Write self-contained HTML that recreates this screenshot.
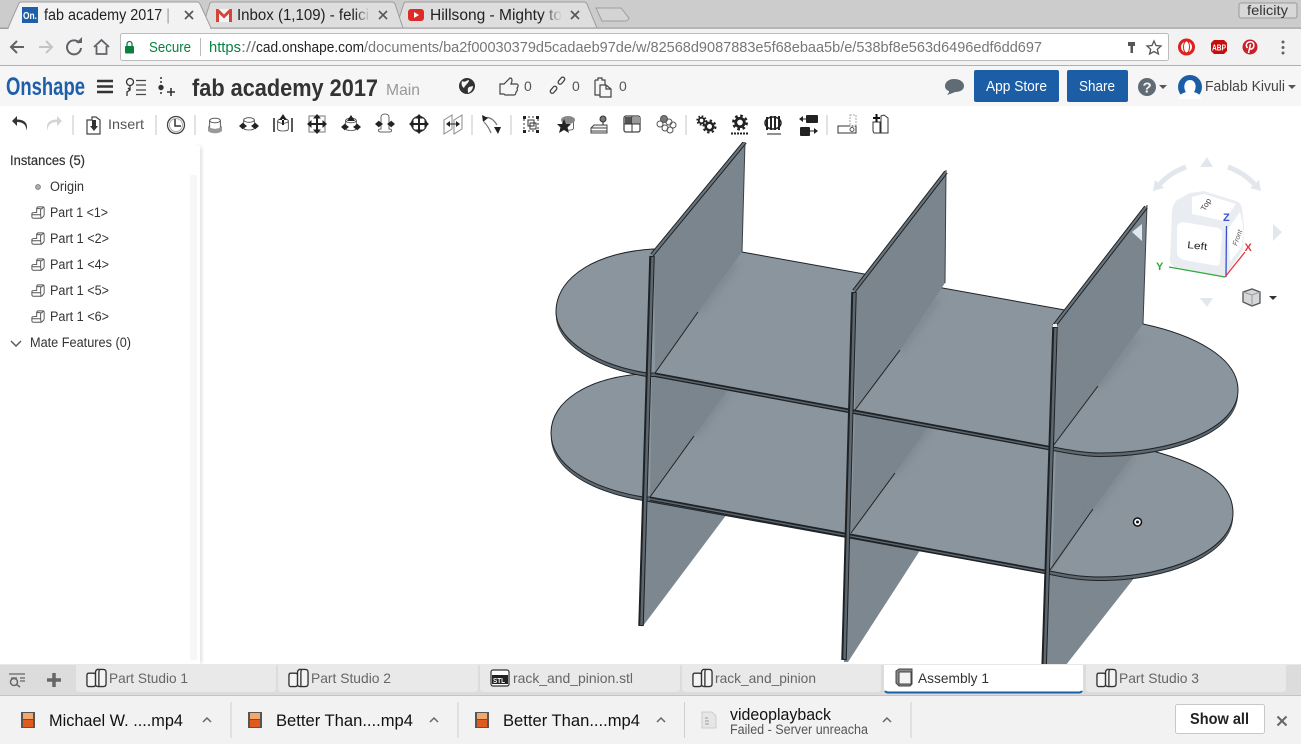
<!DOCTYPE html>
<html><head><meta charset="utf-8"><title>fab academy 2017</title>
<style>
html,body{margin:0;padding:0;width:1301px;height:744px;overflow:hidden;background:#fff}
svg{display:block}
text{font-family:"Liberation Sans",sans-serif;fill:#333}
</style></head><body>
<svg width="1301" height="744" viewBox="0 0 1301 744" xmlns="http://www.w3.org/2000/svg">
<defs>
<filter id="b" x="-50%" y="-50%" width="200%" height="200%"><feGaussianBlur stdDeviation="4"/></filter>
<filter id="sh" x="-20%" y="-5%" width="140%" height="110%"><feGaussianBlur stdDeviation="2"/></filter>
<linearGradient id="fadeA"><stop offset="0" stop-color="#f2f2f2" stop-opacity="0"/><stop offset="1" stop-color="#f2f2f2"/></linearGradient>
<linearGradient id="fadeI"><stop offset="0" stop-color="#dedede" stop-opacity="0"/><stop offset="1" stop-color="#dedede"/></linearGradient>
<clipPath id="view"><rect x="200" y="142" width="1101" height="523"/></clipPath>
<symbol id="part" viewBox="0 0 16 16" overflow="visible"><path d="M1 9 Q1 7.500 3 7.500 L6.500 7.500 L6.500 3 Q6.500 1.500 8 1 L13 1 Q15 1 15 3 V10 Q15 11 14 12 L12 14 H3 Q1 14 1 12 Z M1 10 H11 L11.500 14 M11 10 V4 L15 1 M6.500 3 H11" fill="none" stroke="#555" stroke-width="1.100"/></symbol>
<symbol id="studio" viewBox="0 0 22 20" overflow="visible"><path d="M1 7 Q1 5 3 5 H8 Q10 5 10 7 V17 Q10 19 8 19 H3 Q1 19 1 17 Z" fill="#f4f4f4" stroke="#333" stroke-width="1.400"/><path d="M10 4 Q10 2 12 1 H18 Q21 1 21 4 V16 Q21 19 18 19 H13 Q10 19 10 17 Z M14 1 Q13.500 3 13.500 5 V19" fill="#f4f4f4" stroke="#333" stroke-width="1.400"/></symbol>
<symbol id="cyl" viewBox="0 0 24 24" overflow="visible"><ellipse cx="12" cy="6" rx="8" ry="3.500" fill="none" stroke="#444" stroke-width="1.300"/><path d="M4 6 V18 C4 22 20 22 20 18 V6" fill="none" stroke="#444" stroke-width="1.300"/></symbol>
<symbol id="gear" viewBox="0 0 24 24" overflow="visible"><circle cx="12" cy="12" r="9.500" fill="none" stroke="#222" stroke-width="3.500" stroke-dasharray="3.730 3.730"/><circle cx="12" cy="12" r="6" fill="none" stroke="#222" stroke-width="4"/></symbol>
<path id="car" d="M-4 2 L0 -2 L4 2" fill="none" stroke="#666" stroke-width="1.500"/>
<g id="cross"><path d="M-8 0 H8 M0 -8 V8" stroke="#222" stroke-width="2"/><path d="M0 -10 L-4 -5.500 H4 Z M0 10 L-4 5.500 H4 Z M-10 0 L-5.500 -4 V4 Z M10 0 L5.500 -4 V4 Z" fill="#222"/></g>
<g id="twoarr"><path d="M-9 0 L-5 -3.500 V3.500 Z M-1 0 L-5 -3 V3 Z" fill="#222" transform="translate(-1,0)"/><path d="M9 0 L5 -3.500 V3.500 Z M1 0 L5 -3 V3 Z" fill="#222" transform="translate(1,0)"/></g>
</defs>

<!-- chrome tab strip -->
<rect width="1301" height="29" fill="#cccccc"/>
<path d="M396 28 L404 3 Q405 2 407 2 L584 2 Q586 2 587 4 L597 28 Z" fill="#dedede" stroke="#9e9e9e"/>
<path d="M202 28 L210 3 Q211 2 213 2 L392 2 Q394 2 395 4 L403 28 Z" fill="#dedede" stroke="#9e9e9e"/>
<path d="M0 28 L8 28 L19 3 Q20 2 22 2 L197 2 Q199 2 200 4 L211 28 L1301 28" fill="#f2f2f2" stroke="#9e9e9e"/>
<path d="M596 8 L621 8 L629 18 Q628 21 625 21 L602 21 Z" fill="#d4d4d4" stroke="#9e9e9e"/>
<rect x="0" y="28" width="8" height="1" fill="#9e9e9e"/><rect x="9" y="28" width="201" height="2" fill="#f2f2f2"/>
<rect x="22" y="7" width="16" height="16" fill="#1f5ea8"/>
<text x="23" y="19" font-size="10" font-weight="bold" style="fill:#fff" textLength="14" lengthAdjust="spacingAndGlyphs">On.</text>
<text x="44" y="20" font-size="15.500" textLength="126" lengthAdjust="spacingAndGlyphs" style="fill:#222">fab academy 2017 |</text>
<rect x="160" y="6" width="14" height="18" fill="url(#fadeA)"/>
<path d="M185 11 L193 19 M193 11 L185 19" stroke="#555" stroke-width="1.600"/>
<rect x="216" y="9" width="16" height="13" fill="#f4f4f4"/>
<path d="M216 9 H218.500 L224 14.500 L229.500 9 H232 V22 H229 V13.500 L224 18.500 L219 13.500 V22 H216 Z" fill="#d54437"/>
<text x="237" y="20" font-size="15.500" textLength="132" lengthAdjust="spacingAndGlyphs" style="fill:#222">Inbox (1,109) - felici</text>
<rect x="355" y="6" width="15" height="18" fill="url(#fadeI)"/>
<path d="M379 11 L387 19 M387 11 L379 19" stroke="#555" stroke-width="1.600"/>
<rect x="408" y="9" width="16" height="12" rx="3" fill="#dd2c28"/><path d="M414 12 L419 15 L414 18 Z" fill="#fff"/>
<text x="430" y="20" font-size="15.500" textLength="132" lengthAdjust="spacingAndGlyphs" style="fill:#222">Hillsong - Mighty to</text>
<rect x="542" y="6" width="20" height="18" fill="url(#fadeI)"/>
<path d="M571 11 L579 19 M579 11 L571 19" stroke="#555" stroke-width="1.600"/>
<rect x="1239" y="3" width="58" height="15" rx="2" fill="#d8d8d8" stroke="#9a9a9a"/>
<text x="1247" y="15" font-size="14" textLength="41" lengthAdjust="spacingAndGlyphs" style="fill:#333">felicity</text>

<!-- address row -->
<rect y="29" width="1301" height="36" fill="#f2f2f2"/>
<rect y="65" width="1301" height="1" fill="#b0b0b0"/>
<path d="M24 47 H11 M17 41 L11 47 L17 53" fill="none" stroke="#5f6368" stroke-width="2"/>
<path d="M39 47 H52 M46 41 L52 47 L46 53" fill="none" stroke="#c4c4c4" stroke-width="2"/>
<path d="M79.500 43 A7 7 0 1 0 81 48" fill="none" stroke="#5f6368" stroke-width="2"/><path d="M76 43 H82 V37 Z" fill="#5f6368"/>
<path d="M94 47 L101.500 40 L109 47 M96.500 46 V54 H106.500 V46" fill="none" stroke="#5f6368" stroke-width="1.800"/>
<rect x="120.500" y="33.500" width="1048" height="27" rx="2" fill="#fff" stroke="#bcbcbc"/>
<rect x="125" y="46" width="9" height="7.500" rx="1" fill="#0b8043"/><path d="M127 46 V44 A2.500 2.500 0 0 1 132 44 V46" fill="none" stroke="#0b8043" stroke-width="1.300"/>
<text x="149" y="52" font-size="15" textLength="42" lengthAdjust="spacingAndGlyphs" style="fill:#0b8043">Secure</text>
<rect x="200" y="38" width="1" height="18" fill="#bbb"/>
<text x="209" y="52" font-size="15" textLength="32" lengthAdjust="spacingAndGlyphs" style="fill:#0b8043">https</text>
<text x="241" y="52" font-size="15" textLength="15" lengthAdjust="spacingAndGlyphs" style="fill:#777">://</text>
<text x="256" y="52" font-size="15" textLength="108" lengthAdjust="spacingAndGlyphs" style="fill:#222">cad.onshape.com</text>
<text x="364" y="52" font-size="15" textLength="678" lengthAdjust="spacingAndGlyphs" style="fill:#777">/documents/ba2f00030379d5cadaeb97de/w/82568d9087883e5f68ebaa5b/e/538bf8e563d6496edf6dd697</text>
<path d="M1128 42 H1135 V46 H1133 V53 H1130.500 V46 H1128 Z" fill="#555"/>
<path d="M1154 41 L1156 45.500 L1161 46 L1157.300 49.300 L1158.400 54 L1154 51.500 L1149.600 54 L1150.700 49.300 L1147 46 L1152 45.500 Z" fill="none" stroke="#555" stroke-width="1.300"/>
<circle cx="1186.500" cy="47" r="7" fill="none" stroke="#e0201b" stroke-width="3"/><ellipse cx="1186.500" cy="47" rx="3" ry="6" fill="#fff" stroke="#e0201b"/>
<path d="M1214 40 H1224 L1227 43 V51 L1224 54 H1214 L1211 51 V43 Z" fill="#c70d0d"/>
<text x="1212" y="50.500" font-size="8" font-weight="bold" style="fill:#fff" textLength="14" lengthAdjust="spacingAndGlyphs">ABP</text>
<circle cx="1250" cy="47" r="7.500" fill="#cb2027"/>
<path d="M1248.500 53 L1250.500 44 M1247.500 48 C1245 45 1247 41.800 1250.500 41.800 C1254.500 41.800 1255 47.500 1251.500 49 C1250.500 49.300 1250 49 1249.500 48.300" fill="none" stroke="#fff" stroke-width="1.500"/>
<circle cx="1283" cy="42" r="1.500" fill="#5f6368"/><circle cx="1283" cy="47.500" r="1.500" fill="#5f6368"/><circle cx="1283" cy="53" r="1.500" fill="#5f6368"/>

<!-- onshape header -->
<rect y="66" width="1301" height="40" fill="#f6f6f6"/>
<text x="6" y="95" font-size="25" font-weight="bold" textLength="79" lengthAdjust="spacingAndGlyphs" style="fill:#1f5ea8">Onshape</text>
<path d="M97 81 H113 M97 86.500 H113 M97 92 H113" stroke="#333" stroke-width="2.400"/>
<circle cx="130" cy="82" r="3.500" fill="none" stroke="#333" stroke-width="1.300"/>
<path d="M130 85.500 V90 L127 92 V96 M128 88 L130 90" fill="none" stroke="#333" stroke-width="1.300"/>
<path d="M136 80.500 H146 M136 85 H146 M136 90 H146 M136 94.500 H146" stroke="#444" stroke-width="1.300"/>
<circle cx="161" cy="78" r="1" fill="#333"/><circle cx="161" cy="82" r="1" fill="#333"/><circle cx="161" cy="87.500" r="2.700" fill="#333"/><circle cx="161" cy="93" r="1" fill="#333"/>
<path d="M167 92 H175 M171 88 V96" stroke="#333" stroke-width="1.600"/>
<text x="192" y="96" font-size="24" font-weight="bold" textLength="186" lengthAdjust="spacingAndGlyphs" style="fill:#333">fab academy 2017</text>
<text x="386" y="95" font-size="16" textLength="34" lengthAdjust="spacingAndGlyphs" style="fill:#999">Main</text>
<circle cx="467" cy="86" r="8" fill="#333"/>
<path d="M462 81 C465 83 467 80 469 80 C469 83 465 85 464 88 C462 87 461 84 462 81 M469 87 L473 86 C473 89 471 92 468 93 C468 90 467 89 469 87" fill="#f6f6f6"/>
<path d="M500 84 H504 L510 78 C513 78 512 82 511 84 H517 C519 85 518 87 517 88 C518 90 517 91 516 92 C516 94 515 95 514 95 H505 L504 94 H500 Z" fill="none" stroke="#444" stroke-width="1.200"/>
<text x="524" y="91" font-size="14" style="fill:#555" textLength="8">0</text>
<g fill="none" stroke="#444" stroke-width="1.300"><rect x="-2" y="-7" width="4" height="8" rx="2" transform="translate(559.500,83) rotate(40)"/><rect x="-2" y="-1" width="4" height="8" rx="2" transform="translate(555.500,87.500) rotate(40)"/></g>
<text x="572" y="91" font-size="14" style="fill:#555" textLength="8">0</text>
<path d="M595 80 H598 V78 H602 V80 H605 V85 M595 80 V95 H600 M600 85 H606 L611 89 V97 H600 Z M606 85 V89 H611" fill="none" stroke="#444" stroke-width="1.200"/>
<text x="619" y="91" font-size="14" style="fill:#555" textLength="8">0</text>
<path d="M954 79 C960 79 964 82 964 86 C964 90 960 92 955 92 C953 93 950 94 947 95 C949 93 949 92 949 91 C946 90 945 88 945 86 C945 82 949 79 954 79 Z" fill="#5f6b75"/>
<rect x="974" y="70" width="85" height="32" rx="2" fill="#1b5ea6"/>
<text x="986" y="91" font-size="15" textLength="61" lengthAdjust="spacingAndGlyphs" style="fill:#fff">App Store</text>
<rect x="1067" y="70" width="61" height="32" rx="2" fill="#1b5ea6"/>
<text x="1079" y="91" font-size="15" textLength="36" lengthAdjust="spacingAndGlyphs" style="fill:#fff">Share</text>
<circle cx="1147" cy="87" r="9" fill="#5f6b75"/>
<text x="1142.500" y="92.500" font-size="15" font-weight="bold" style="fill:#f6f6f6">?</text>
<path d="M1159 85 H1167 L1163 89 Z" fill="#555"/>
<circle cx="1190" cy="87" r="12" fill="#1b5ea6"/>
<path d="M1179 99 C1180 93 1184 93 1186 92 C1183 88 1184 80 1190 80 C1196 80 1197 88 1194 92 C1196 93 1200 93 1201 99 Z" fill="#fff"/>
<text x="1205" y="91" font-size="14.500" textLength="80" lengthAdjust="spacingAndGlyphs" style="fill:#444">Fablab Kivuli</text>
<path d="M1288 85 H1296 L1292 89 Z" fill="#555"/>

<!-- 3d viewport -->
<rect y="106" width="1301" height="559" fill="#fff"/>
<g clip-path="url(#view)">
 <!-- panel parts below bottom shelf -->
 <path d="M644 495 L727 514 L643 626 L640 626 Z" fill="#7d878f"/>
 <path d="M848 530 L928 538 L848 662 L844 662 Z" fill="#7d878f"/>
 <path d="M1048 565 L1135 577 L1062 670 L1044 670 Z" fill="#7d878f"/>
 <!-- bottom shelf -->
 <path d="M643 501 C590 492 551 469 551 437 C551 404 590 382 640 378 L1153 455 C1200 468 1233 485 1233 517 C1233 554 1170 581 1100 581 C1080 581 1065 578 1050 575 Z" fill="#1e2225"/>
 <path d="M643 500 C590 491 551 468 551 436 C551 403 590 381 640 377 L1153 454 C1200 467 1233 484 1233 516 C1233 553 1170 580 1100 580 C1080 580 1065 577 1050 574 Z" fill="#5d676f"/>
 <path d="M643 497 C590 488 551 465 551 433 C551 400 590 378 640 374 L1153 451 C1200 464 1233 481 1233 513 C1233 550 1170 577 1100 577 C1080 577 1065 574 1050 571 L650 497 Z" fill="#8a959e" stroke="#1e2225" stroke-width="1"/>
 <!-- mid panels -->
 <path d="M652 376 L727 391 L694 436 L650 497 Z" fill="#7b858d"/>
 <path d="M855 411 L930 424 L895 473 L851 533 Z" fill="#7b858d"/>
 <path d="M1056 447 L1133 455 L1093 509 L1052 570 Z" fill="#7b858d"/>
 <g filter="url(#b)" stroke="#7b858d" stroke-width="7" opacity=".9">
  <path d="M694 436 L727 391"/><path d="M895 473 L930 424"/><path d="M1093 509 L1133 455"/>
 </g>
 <path d="M694 436 L650 497 M895 473 L851 533 M1093 509 L1050 570" stroke="#222" stroke-width="1"/>
 <!-- top shelf -->
 <path d="M647 377 C600 370 556 345 556 316 C556 279 600 256 653 253 L1143 328 C1195 339 1238 362 1238 394 C1238 434 1170 457 1100 457 C1085 457 1070 454 1053 451 L655 377 Z" fill="#1e2225"/>
 <path d="M647 376 C600 369 556 344 556 315 C556 278 600 255 653 252 L1143 327 C1195 338 1238 361 1238 393 C1238 433 1170 456 1100 456 C1085 456 1070 453 1053 450 L655 376 Z" fill="#5d676f"/>
 <path d="M647 373 C600 366 556 341 556 312 C556 275 600 252 653 249 L742 252 L1143 324 C1195 335 1238 358 1238 390 C1238 430 1170 453 1100 453 C1085 453 1070 450 1053 447 L655 373 Z" fill="#8a959e" stroke="#1e2225" stroke-width="1"/>
 <!-- front rims -->
 <path d="M650 499 L1050 573 M655 375 L1053 449" stroke="#1e2225" stroke-width="3.800"/>
 <path d="M650 499 L1050 573 M655 375 L1053 449" stroke="#5d676f" stroke-width="1.400"/>
 <!-- top panels -->
 <path d="M654 256 L745 142 L742 252 L698 312 L655 373 Z" fill="#7b858d"/>
 <path d="M856 292 L946 170 L945 283 L900 350 L855 410 Z" fill="#7b858d"/>
 <path d="M1055 327 L1147 205 L1143 324 L1098 386 L1053 446 Z" fill="#7b858d"/>
 <g filter="url(#b)" stroke="#7b858d" stroke-width="7" opacity=".9">
  <path d="M698 312 L736 262"/><path d="M900 350 L937 298"/><path d="M1098 386 L1136 336"/>
 </g>
 <path d="M698 312 L655 373 M900 350 L855 410 M1098 386 L1053 446" stroke="#222" stroke-width="1"/>
 <path d="M745 142 L742 252 M946 170 L945 283 M1147 205 L1143 324" stroke="#3a4046" stroke-width="1"/>
 <!-- slanted top edges -->
 <g fill="none" stroke-linejoin="round">
  <path d="M652 255 L745 142 M854 291 L946 172 M1054 326 L1146 207" stroke="#1e2225" stroke-width="4.200"/>
  <path d="M652 255 L745 142 M854 291 L946 172 M1054 326 L1146 207" stroke="#6a747c" stroke-width="2.200"/>
  <path d="M652 256 L641 626 M854 292 L844 660 M1055 327 L1044 670" stroke="#1e2225" stroke-width="5.500"/>
  <path d="M652.500 257 L641.500 625 M854.500 293 L844.500 659 M1055.500 328 L1044.500 670" stroke="#5d676f" stroke-width="2.500"/>
 </g>
 <rect x="1053" y="324" width="4" height="3" fill="#eee"/>
 <circle cx="1137.500" cy="522" r="4" fill="#fff" stroke="#111" stroke-width="1.500"/><circle cx="1137.500" cy="522" r="1.500" fill="#111"/>

 <!-- nav cube -->
 <g fill="#e1e7ec">
  <path d="M1207 157 L1213 167 H1200 Z M1207 307 L1213 298 H1200 Z M1132 232 L1142 224 V241 Z M1282 232 L1273 224 V241 Z"/>
  <path d="M1153 191 L1155 180 L1164 188 Z M1261 191 L1259 180 L1250 188 Z"/>
 </g>
 <path d="M1186 167 C1175 171 1166 177 1159 185 M1228 167 C1239 171 1248 177 1255 185" fill="none" stroke="#e1e7ec" stroke-width="5"/>
 <path d="M1172 212 Q1172 205 1177 200 L1190 193 L1204 191 L1236 201 Q1241 203 1242 208 L1244 225 L1243 250 L1225 277 L1175 267 Q1170 265 1170 260 Z" fill="#e9edf1"/>
 <path d="M1192 197 L1204 194 L1236 204 L1224 221 L1192 214 Z" fill="#fff"/>
 <path d="M1183 222 L1218 228 C1221 229 1222 231 1222 234 L1220 262 C1220 265 1218 266 1215 265.500 L1184 260 C1180 259 1177 256 1177 252 L1177 228 C1177 224 1180 222 1183 222 Z" fill="#fff"/>
 <path d="M1228 229 L1240 212 L1243 225 L1242 246 L1230 262 Z" fill="#fff"/>
 <text x="1187" y="248" font-size="10" transform="rotate(6 1187 248)" textLength="20" lengthAdjust="spacingAndGlyphs" style="fill:#222">Left</text>
 <text x="1203" y="208" font-size="8" transform="rotate(-60 1207 208)" style="fill:#444">Top</text>
 <text x="1231" y="246" font-size="7" font-style="italic" transform="rotate(-70 1234 242)" style="fill:#555">Front</text>
 <path d="M1226 277 L1226.500 226" stroke="#3d4fd1" stroke-width="1.300"/>
 <path d="M1225 277 L1169 267" stroke="#2fa83a" stroke-width="1.300"/>
 <path d="M1225 277 L1245 252" stroke="#e23a3a" stroke-width="1.300"/>
 <text x="1223" y="221" font-size="11" font-weight="bold" style="fill:#3d4fd1">Z</text>
 <text x="1156" y="270" font-size="11" font-weight="bold" style="fill:#2fa83a">Y</text>
 <text x="1244.500" y="251" font-size="11" font-weight="bold" style="fill:#e23a3a">X</text>
 <path d="M1243 292 L1252 289 L1260 292 V303 L1252 306 L1243 302 Z" fill="#d5d8db" stroke="#555" stroke-width="1.300"/>
 <path d="M1243 292 L1252 295 L1260 292 M1252 295 V306" fill="none" stroke="#999"/>
 <path d="M1269 296 H1277 L1273 300 Z" fill="#333"/>
</g>

<!-- toolbar -->
<rect y="106" width="1301" height="36" fill="#fff"/>
<g stroke="#d9d9d9" stroke-width="1.500">
 <path d="M73 115 V135 M156 115 V135 M195 115 V135 M472 115 V135 M511 115 V135 M686 115 V135 M827 115 V135"/>
</g>
<path d="M26 131 C27 125 23 122 17 122 V126 L12 121 L17 116 V119.500 C25 119.500 29 124 26 131 Z" fill="#333"/>
<path d="M48 131 C47 125 51 122 57 122 V126 L62 121 L57 116 V119.500 C49 119.500 45 124 48 131 Z" fill="#d4d4d4"/>
<path d="M87 120 H92 V117 H96 L100 120 V134 H87 Z" fill="none" stroke="#444" stroke-width="1.200"/>
<path d="M92 120 H96 V126 H98 L94 131 L90 126 H92 Z" fill="#333"/>
<text x="108" y="129" font-size="14" textLength="36" lengthAdjust="spacingAndGlyphs" style="fill:#555">Insert</text>
<circle cx="176" cy="125" r="8.500" fill="none" stroke="#444" stroke-width="1.300"/><circle cx="176" cy="125" r="6.500" fill="none" stroke="#aaa"/>
<path d="M175 119 V126 H181" fill="none" stroke="#333" stroke-width="1.500"/>
<use href="#cyl" x="207" y="116" width="16" height="17"/>
<path d="M208 125 C209 129 213 128 215 129 C217 128 221 129 222 125 V131 C219 134 211 134 208 131 Z" fill="#999"/>
<use href="#cyl" x="241" y="115" width="16" height="18"/><use href="#twoarr" transform="translate(249,126)"/>
<use href="#cyl" x="275" y="116" width="16" height="18"/><path d="M283 114 L279 120 H287 Z M282 119 H284 V125 H282 Z" fill="#222"/><path d="M274 118 V132 M292 118 V132" stroke="#222" stroke-width="1.500"/>
<rect x="309" y="116" width="16" height="16" fill="none" stroke="#777"/><use href="#cross" transform="translate(317,124)"/>
<use href="#cyl" x="343" y="116" width="16" height="17"/><use href="#twoarr" transform="translate(351,127)"/><path d="M351 115 L347 121 H355 Z" fill="#222"/>
<path d="M381 132 C378 132 377 129 381 129 V117 C381 113 389 113 389 117 V129 C393 129 392 132 389 132 Z" fill="none" stroke="#666"/><use href="#twoarr" transform="translate(385,124)"/>
<circle cx="419" cy="124" r="7.500" fill="none" stroke="#333" stroke-width="1.300"/><use href="#cross" transform="translate(419,124)"/>
<path d="M444 120 L452 115 V129 L444 134 Z M454 120 L462 115 V129 L454 134 Z" fill="none" stroke="#888"/><path d="M447 124 H459" stroke="#222"/><path d="M446 124 L450 121 V127 Z M460 124 L456 121 V127 Z" fill="#222"/>
<path d="M484 118 C490 116 494 120 497 125 M491 133 C489 128 486 124 484 122" fill="none" stroke="#777" stroke-width="1.200"/><path d="M482 115 L488 118 L483 122 Z M498 134 L494 127 H501 Z" fill="#222"/>
<rect x="524" y="117" width="14" height="14" fill="none" stroke="#333" stroke-dasharray="2 2"/><rect x="523" y="116" width="3" height="3" fill="#222"/><rect x="536" y="116" width="3" height="3" fill="#222"/><rect x="523" y="130" width="3" height="3" fill="#222"/><rect x="536" y="130" width="3" height="3" fill="#222"/>
<rect x="528" y="120" width="6" height="6" fill="none" stroke="#333"/><rect x="530" y="123" width="6" height="6" fill="none" stroke="#333"/>
<use href="#cyl" x="561" y="115" width="15" height="19"/><ellipse cx="568" cy="120" rx="7" ry="4" fill="#888"/><path d="M564 119 L566 124 L571 124 L567.500 127.500 L569 133 L564 130 L559 133 L560.500 127.500 L557 124 L562 124 Z" fill="#222"/>
<circle cx="603" cy="119" r="3" fill="#777" stroke="#333"/><path d="M603 122 V126" stroke="#222"/>
<path d="M591 128 L594 125 H607 V131 H591 Z M591 128 H607 M591 128 V133 H607 V129" fill="#eee" stroke="#444"/>
<rect x="624" y="116" width="16" height="16" rx="2" fill="none" stroke="#444" stroke-width="1.300"/>
<rect x="625" y="117" width="7" height="7" fill="#555"/><rect x="633" y="117" width="7" height="7" fill="#999"/><path d="M624 124 H640 M632 116 V132" stroke="#333"/>
<g fill="none" stroke="#555"><circle cx="664" cy="119" r="3.500" fill="#777"/><circle cx="669" cy="122" r="3"/><circle cx="673" cy="125" r="3"/><circle cx="660" cy="124" r="3"/><circle cx="665" cy="128" r="3"/><circle cx="670" cy="130" r="3"/></g>
<use href="#gear" x="696" y="115" width="11" height="11"/><use href="#gear" x="702" y="119" width="15" height="15"/>
<use href="#gear" x="731" y="114" width="18" height="17"/><path d="M731 133.500 H749" stroke="#222" stroke-width="2" stroke-dasharray="2 1"/>
<path d="M767 117 V130 M771 116 V130 M775 116 V130 M779 116 V130" stroke="#222" stroke-width="2"/><ellipse cx="773" cy="123" rx="8" ry="6" fill="none" stroke="#222" stroke-width="1.500"/><path d="M767 134 H781" stroke="#222"/>
<rect x="806" y="115" width="12" height="8" rx="1" fill="#222"/><rect x="800" y="127" width="10" height="9" rx="1" fill="#222"/><path d="M800 119 H806 M810 131 H817" stroke="#222"/><path d="M799 119 L803 116 V122 Z M818 131 L814 128 V134 Z" fill="#222"/>
<rect x="838" y="126" width="18" height="7" fill="none" stroke="#333"/><rect x="850" y="115" width="6" height="11" fill="none" stroke="#aaa" stroke-dasharray="2 1"/><circle cx="852" cy="129.500" r="2" fill="none" stroke="#555"/>
<path d="M881 116 L884 115 L888 118 V133 H881 Z" fill="#fff" stroke="#333"/><path d="M873 122 H880 V133 H874 L873 131 Z" fill="#fff" stroke="#333"/><path d="M873 118 H880 M876.500 114 V122" stroke="#111" stroke-width="2"/>

<!-- sidebar -->
<rect x="196" y="147" width="6" height="517" fill="#999" opacity=".3" filter="url(#sh)"/>
<rect x="0" y="146" width="200" height="518" fill="#fff"/>
<rect x="190" y="175" width="7" height="485" fill="#f7f7f7"/>
<text x="10" y="165" font-size="13.500" textLength="75" lengthAdjust="spacingAndGlyphs" style="fill:#333;stroke:#333;stroke-width:.2">Instances (5)</text>
<circle cx="38" cy="187" r="2.500" fill="#aaa" stroke="#777" stroke-width=".7"/>
<text x="50" y="191" font-size="13.500" textLength="34" lengthAdjust="spacingAndGlyphs">Origin</text>
<use href="#part" x="31" y="206" width="14" height="14"/><text x="50" y="217" font-size="13.500" textLength="58" lengthAdjust="spacingAndGlyphs">Part 1 &lt;1&gt;</text>
<use href="#part" x="31" y="232" width="14" height="14"/><text x="50" y="243" font-size="13.500" textLength="59" lengthAdjust="spacingAndGlyphs">Part 1 &lt;2&gt;</text>
<use href="#part" x="31" y="258" width="14" height="14"/><text x="50" y="269" font-size="13.500" textLength="59" lengthAdjust="spacingAndGlyphs">Part 1 &lt;4&gt;</text>
<use href="#part" x="31" y="284" width="14" height="14"/><text x="50" y="295" font-size="13.500" textLength="59" lengthAdjust="spacingAndGlyphs">Part 1 &lt;5&gt;</text>
<use href="#part" x="31" y="310" width="14" height="14"/><text x="50" y="321" font-size="13.500" textLength="59" lengthAdjust="spacingAndGlyphs">Part 1 &lt;6&gt;</text>
<path d="M11 341 L16 346 L21 341" fill="none" stroke="#555" stroke-width="1.400"/>
<text x="30" y="347" font-size="13.500" textLength="101" lengthAdjust="spacingAndGlyphs">Mate Features (0)</text>

<!-- bottom tabs -->
<rect y="665" width="1301" height="31" fill="#dcdcdc"/>
<rect y="664" width="1301" height="1" fill="#e8e8e8"/>
<path d="M9 674 H25 M11 678 H17 M20 678 H25 M20 681 H25" stroke="#666" stroke-width="1.300"/><circle cx="14" cy="682" r="3.500" fill="none" stroke="#666" stroke-width="1.500"/><path d="M16.500 684.500 L20 687" stroke="#666" stroke-width="1.500"/>
<path d="M47 680 H61 M54 673 V687" stroke="#666" stroke-width="3.500"/>
<g fill="#e9e9e9">
 <path d="M76 665 H276 V688 Q276 692 272 692 H80 Q76 692 76 688 Z"/>
 <path d="M278 665 H478 V688 Q478 692 474 692 H282 Q278 692 278 688 Z"/>
 <path d="M480 665 H680 V688 Q680 692 676 692 H484 Q480 692 480 688 Z"/>
 <path d="M682 665 H881 V688 Q881 692 877 692 H686 Q682 692 682 688 Z"/>
 <path d="M1086 665 H1286 V688 Q1286 692 1282 692 H1090 Q1086 692 1086 688 Z"/>
</g>
<path d="M884 665 H1083 V688 Q1083 692 1079 692 H888 Q884 692 884 688 Z" fill="#fff"/>
<path d="M885 691 Q886 692.500 888 692.500 H1079 Q1081 692.500 1082 691" fill="none" stroke="#1b5ea6" stroke-width="2"/>
<use href="#studio" x="86" y="668" width="21" height="20"/>
<text x="109" y="683" font-size="14" textLength="79" lengthAdjust="spacingAndGlyphs" style="fill:#666">Part Studio 1</text>
<use href="#studio" x="288" y="668" width="21" height="20"/>
<text x="311" y="683" font-size="14" textLength="80" lengthAdjust="spacingAndGlyphs" style="fill:#666">Part Studio 2</text>
<rect x="491" y="670" width="18" height="16" rx="2" fill="#fff" stroke="#333" stroke-width="1.200"/><rect x="492" y="675" width="16" height="9" fill="#222"/>
<text x="493" y="683" font-size="7" font-weight="bold" style="fill:#fff" textLength="12" lengthAdjust="spacingAndGlyphs">STL</text>
<text x="513" y="683" font-size="14" textLength="120" lengthAdjust="spacingAndGlyphs" style="fill:#666">rack_and_pinion.stl</text>
<use href="#studio" x="692" y="668" width="21" height="20"/>
<text x="715" y="683" font-size="14" textLength="101" lengthAdjust="spacingAndGlyphs" style="fill:#666">rack_and_pinion</text>
<path d="M896 671 L899 669 H912 V684 L910 686 H899 L896 683 Z" fill="#888" stroke="#444"/><rect x="899" y="672" width="12" height="12" fill="#f3f3f3" stroke="#444"/>
<text x="918" y="683" font-size="14" textLength="71" lengthAdjust="spacingAndGlyphs" style="fill:#333">Assembly 1</text>
<use href="#studio" x="1096" y="668" width="21" height="20"/>
<text x="1119" y="683" font-size="14" textLength="80" lengthAdjust="spacingAndGlyphs" style="fill:#666">Part Studio 3</text>

<!-- download bar -->
<rect y="696" width="1301" height="48" fill="#f2f2f2"/>
<rect y="695" width="1301" height="1" fill="#c4c4c4"/>
<g stroke="#cfcfcf"><path d="M231 702 V738 M458 702 V738 M684.500 702 V738 M911 702 V738"/></g>
<g id="f1"><rect x="21" y="712" width="14" height="16" fill="#555"/><rect x="23" y="713" width="10" height="6" fill="#f4a76a"/><rect x="23" y="720" width="10" height="7" fill="#e0591f"/></g>
<use href="#f1" x="227"/><use href="#f1" x="454"/>
<text x="49" y="726" font-size="17" textLength="134" lengthAdjust="spacingAndGlyphs" style="fill:#111">Michael W. ....mp4</text>
<text x="276" y="726" font-size="17" textLength="137" lengthAdjust="spacingAndGlyphs" style="fill:#111">Better Than....mp4</text>
<text x="503" y="726" font-size="17" textLength="137" lengthAdjust="spacingAndGlyphs" style="fill:#111">Better Than....mp4</text>
<use href="#car" x="207" y="720"/><use href="#car" x="434" y="720"/><use href="#car" x="661" y="720"/><use href="#car" x="887" y="720"/>
<path d="M702 712 H712 L716 716 V728 H702 Z" fill="#e6e6e6" stroke="#ccc"/><path d="M705 718 H708 M705 721 H709 M705 724 H709" stroke="#999"/>
<text x="730" y="720" font-size="17" textLength="101" lengthAdjust="spacingAndGlyphs" style="fill:#111">videoplayback</text>
<text x="730" y="734" font-size="13.500" textLength="138" lengthAdjust="spacingAndGlyphs" style="fill:#555">Failed - Server unreacha</text>
<rect x="852" y="724" width="17" height="13" fill="url(#fadeBar)"/>
<rect x="1175.500" y="704.500" width="89" height="29" rx="2" fill="#fff" stroke="#c8c8c8"/>
<text x="1190" y="724" font-size="16" font-weight="bold" textLength="59" lengthAdjust="spacingAndGlyphs" style="fill:#222">Show all</text>
<path d="M1277.500 716.500 L1286.500 725.500 M1286.500 716.500 L1277.500 725.500" stroke="#666" stroke-width="2"/>
</svg>
</body></html>
